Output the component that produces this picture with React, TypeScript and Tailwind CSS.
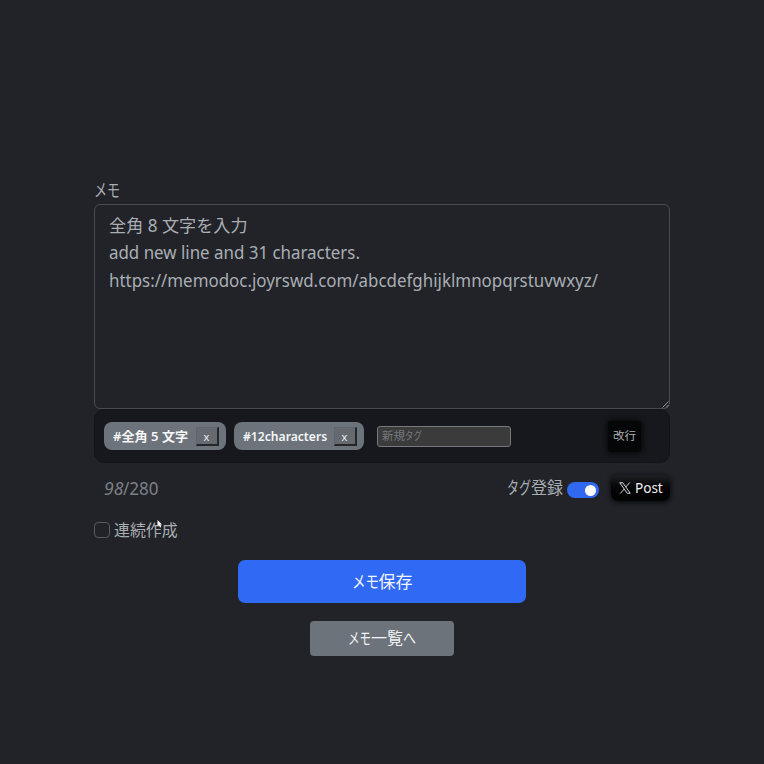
import { useLayoutEffect, useRef, useState } from "react";

type FitProps = { text: string; width: number; className?: string };

/* A run of text set to a given advance width. */
function Fit({ text, width, className = "" }: FitProps) {
  const ref = useRef<HTMLSpanElement>(null);
  const [scale, setScale] = useState(1);
  useLayoutEffect(() => {
    if (ref.current) setScale(width / ref.current.offsetWidth);
  }, [width, text]);
  return (
    <span className={`inline-block whitespace-pre ${className}`} style={{ width }}>
      <span ref={ref} className="inline-block origin-left" style={{ transform: `scaleX(${scale})` }}>
        {text}
      </span>
    </span>
  );
}

function Tag({ label, width, className }: { label: string; width: number; className: string }) {
  return (
    <div className={`flex h-7 items-center rounded-lg bg-[#6c737a] pl-[9px] ${className}`}>
      <Fit text={label} width={width} className="text-[13px] leading-7 font-semibold text-[#f4f6f8]" />
      <button className="ml-[7px] flex h-[19px] w-[23px] items-center justify-center border-t border-r-2 border-b-2 border-l border-t-[#60666c] border-r-[#24262a] border-b-[#24262a] border-l-[#60666c] bg-[#646a70] pt-[2px] text-[11px] leading-none text-[#eef0f2]">
        x
      </button>
    </div>
  );
}

export default function App() {
  return (
    <main className="flex h-[764px] w-[764px] flex-col items-center bg-[#212328] pt-[176px] font-['Noto_Sans','Noto_Sans_CJK_JP',sans-serif] text-[#a9aeb4]">
      <section className="flex w-[576px] flex-col">
        <div className="h-[27.5px] text-[18px] leading-[29px]">
          <Fit text="メモ" width={26} />
        </div>

        <div className="relative flex h-[205.5px] flex-col rounded-md border border-[#484b50] pt-[6px] pl-[14px] text-[17.5px]">
          <div className="h-[27.5px] leading-7"><Fit text="全角 8 文字を入力" width={139} /></div>
          <div className="h-[27.5px] leading-7"><Fit text="add new line and 31 characters." width={251} /></div>
          <div className="h-[27.5px] leading-7"><Fit text="https://memodoc.joyrswd.com/abcdefghijklmnopqrstuvwxyz/" width={489} /></div>
          <svg className="absolute right-0 bottom-0 h-[7px] w-[7px]" viewBox="0 0 7 7" stroke="#a0a2a5" strokeWidth="0.9">
            <path d="M0.5 6.5 6.5 0.5M4 6.5 6.5 4" />
          </svg>
        </div>

        <div className="flex h-[54px] items-center rounded-[10px] border border-[#121317] bg-[#17181d] pl-[9px]">
          <Tag label="#全角 5 文字" width={75.5} className="w-[122px]" />
          <Tag label="#12characters" width={84} className="ml-[7.5px] w-[130.5px]" />
          <div className="ml-[13px] flex h-[21px] w-[134px] items-center rounded-[3px] border border-[#77797b] bg-[#3b3b3b] pl-1 text-[11px] text-[#76797d]">
            <Fit text="新規" width={23} />
            <Fit text="タグ" width={17} />
          </div>
          <button className="ml-[97px] flex h-[31px] w-[33px] items-center justify-center rounded-[4px] bg-[#050607] text-[11.5px] text-[#b0b2b5] shadow-[0_0_4px_2px_#0a0b0d]">
            <Fit text="改行" width={23} />
          </button>
        </div>

        <div className="mt-[9px] flex h-8 items-center pl-[10px]">
          <div className="w-[403px] text-[17.5px] leading-[31px] text-[#7c8085]">
            <Fit text="98" width={19} className="italic" />
            <Fit text="/280" width={36} />
          </div>
          <Fit text="タグ" width={24} className="text-[16.5px] leading-8" />
          <Fit text="登録" width={32} className="text-[16.5px] leading-8" />
          <div className="mt-[4px] ml-[4px] flex h-4 w-8 items-center justify-end rounded-full bg-[#3069f0] pr-[3px]">
            <span className="h-[11px] w-[11px] rounded-full bg-white" />
          </div>
          <button className="ml-[12px] flex h-[26px] w-[59px] items-center rounded-[7px] bg-linear-to-b from-[#1d1f22] to-[#030304] to-60% pl-[8px] text-[14.5px] text-[#eef0f2] shadow-[0_1px_4px_1px_#0b0c0e]">
            <svg className="h-3 w-3" viewBox="0 0 24 24" fill="none" stroke="currentColor" strokeWidth="1.8">
              <path d="M1.5 1.5H7.5L22.5 22.5H16.5ZM21.5 1 13.5 10M10.5 14 2.5 23" />
            </svg>
            <Fit text="Post" width={28} className="ml-[4px]" />
          </button>
        </div>

        <div className="mt-[10px] flex h-8 items-center">
          <span className="h-4 w-4 rounded-[4px] border border-[#55585d]" />
          <span className="relative ml-1">
            <Fit text="連続作成" width={63.5} className="text-[16px] leading-8" />
            <svg className="absolute top-[6px] left-[43px] h-[8px] w-[6px]" viewBox="0 0 6 8">
              <path d="M0.5 0V6L2 5 3 7.5 4.2 7 3.3 4.5H5Z" fill="white" />
            </svg>
          </span>
        </div>
      </section>

      <button className="mt-[14px] h-[43px] w-72 rounded-[7px] bg-[#3069f3] text-[17px] leading-[43px] text-[#f2f5fb]">
        <Fit text="メモ" width={27} />
        <Fit text="保存" width={34} />
      </button>
      <button className="mt-[18px] h-[35px] w-36 rounded-[4px] bg-[#6c737a] text-[16px] leading-[35px] text-[#f2f3f4]">
        <Fit text="メモ" width={23} />
        <Fit text="一覧" width={32} />
        <Fit text="へ" width={13} />
      </button>
    </main>
  );
}
